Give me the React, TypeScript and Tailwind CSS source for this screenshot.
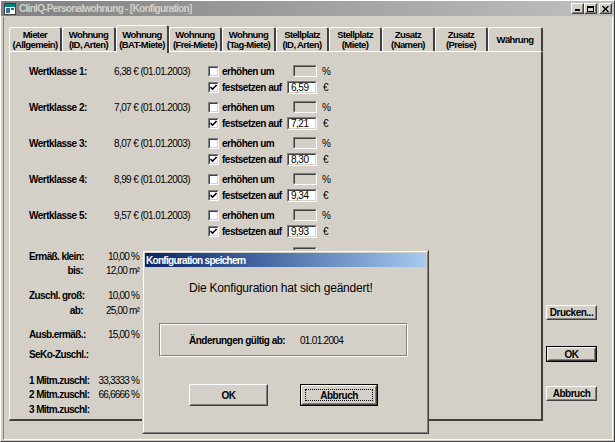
import React from "react";

type BoxProps = { className?: string; inner?: string; children?: React.ReactNode };

function Sunken({ className = "", inner = "", children }: BoxProps) {
  return (
    <div className={"border border-t-[#808080] border-l-[#808080] border-r-white border-b-white " + className}>
      <div className={"w-full h-full border border-t-[#404040] border-l-[#404040] border-r-[#d4d0c8] border-b-[#d4d0c8] " + inner}>
        {children}
      </div>
    </div>
  );
}

function Raised({ className = "", inner = "", children }: BoxProps) {
  return (
    <div className={"border border-t-white border-l-white border-r-[#404040] border-b-[#404040] " + className}>
      <div className={"w-full h-full border border-t-[#d4d0c8] border-l-[#d4d0c8] border-r-[#808080] border-b-[#808080] " + inner}>
        {children}
      </div>
    </div>
  );
}

function Check({ checked }: { checked?: boolean }) {
  return (
    <Sunken className="w-[11px] h-[11px] shrink-0" inner="bg-white flex items-center justify-center">
      {checked && (
        <svg width="7" height="7" viewBox="0 0 7 7">
          <path d="M0.5 3 L2.5 5.2 L6.5 1" stroke="#000" strokeWidth="1.6" fill="none" />
        </svg>
      )}
    </Sunken>
  );
}

function WinButton({ label, def, className = "" }: { label: string; def?: boolean; className?: string }) {
  const body = (
    <Raised className="w-full h-full" inner="flex items-center justify-center font-bold">
      {label}
    </Raised>
  );
  if (def) {
    return <div className={"border border-black " + className}>{body}</div>;
  }
  return <div className={className}>{body}</div>;
}

const tabs: { l1: string; l2?: string; w: string; sel?: boolean }[] = [
  { l1: "Mieter", l2: "(Allgemein)", w: "w-[53px]" },
  { l1: "Wohnung", l2: "(ID, Arten)", w: "w-[54px]" },
  { l1: "Wohnung", l2: "(BAT-Miete)", w: "w-[53px]", sel: true },
  { l1: "Wohnung", l2: "(Frei-Miete)", w: "w-[53px]" },
  { l1: "Wohnung", l2: "(Tag-Miete)", w: "w-[54px]" },
  { l1: "Stellplatz", l2: "(ID, Arten)", w: "w-[53px]" },
  { l1: "Stellplatz", l2: "(Miete)", w: "w-[53px]" },
  { l1: "Zusatz", l2: "(Namen)", w: "w-[53px]" },
  { l1: "Zusatz", l2: "(Preise)", w: "w-[53px]" },
  { l1: "Währung", w: "w-[55px]" },
];

const wk = [
  ["Wertklasse 1:", "6,38 € (01.01.2003)", "6,59"],
  ["Wertklasse 2:", "7,07 € (01.01.2003)", "7,21"],
  ["Wertklasse 3:", "8,07 € (01.01.2003)", "8,30"],
  ["Wertklasse 4:", "8,99 € (01.01.2003)", "9,34"],
  ["Wertklasse 5:", "9,57 € (01.01.2003)", "9,93"],
];

function Tab({ t }: { t: (typeof tabs)[number] }) {
  const base =
    "rounded-t-[3px] border-t border-l border-r-2 border-t-white border-l-white border-r-[#404040] flex flex-col items-center justify-center font-bold leading-[10px] text-[9.5px] tracking-[-0.6px] whitespace-nowrap bg-[#d4d0c8] ";
  const size = t.sel ? "h-[28px] -mb-[2px] relative z-10 " : "h-[24px] ";
  return (
    <div className={base + size + t.w}>
      <span>{t.l1}</span>
      {t.l2 && <span>{t.l2}</span>}
    </div>
  );
}

function LowRow({ label, value, right, className = "" }: { label: string; value?: string; right?: boolean; className?: string }) {
  return (
    <div className={"flex items-center h-[14px] " + className}>
      <div className={"w-[58px] font-bold whitespace-nowrap tracking-[-0.6px] " + (right ? "text-right pr-[4px]" : "")}>{label}</div>
      <div className="w-[52px] text-right whitespace-nowrap tracking-[-0.8px]">{value}</div>
    </div>
  );
}

export default function App() {
  return (
    <div className="w-[615px] h-[442px] bg-[#d4d0c8] relative overflow-hidden border border-t-white border-l-white border-r-[#404040] border-b-[#404040] font-['Liberation_Sans',Arial,sans-serif] text-[10px] tracking-[-0.5px] text-black">
      {/* title bar */}
      <div className="h-[15px] flex items-center bg-gradient-to-r from-[#808080] to-[#c0c0c0] pl-[3px] pr-[2px]">
        <svg width="12" height="12" viewBox="0 0 12 12" className="shrink-0">
          <rect x="0.5" y="0.5" width="11" height="11" fill="#fff" stroke="#404040" />
          <rect x="1" y="1" width="10" height="3" fill="#008080" />
          <rect x="2" y="5" width="4" height="5" fill="#3a6ea5" />
          <rect x="7" y="5" width="3" height="2" fill="#008080" />
        </svg>
        <span className="ml-[3px] font-bold text-[#d4d0c8] text-[10px] tracking-[-0.7px]">ClinIQ-Personalwohnung - [Konfiguration]</span>
        <div className="ml-auto flex items-center">
          <Raised className="w-[13px] h-[11px]" inner="bg-[#d4d0c8] flex items-end justify-center pb-[1px]">
            <div className="w-[5px] h-[2px] bg-black" />
          </Raised>
          <Raised className="w-[13px] h-[11px]" inner="bg-[#d4d0c8] flex items-center justify-center">
            <div className="w-[7px] h-[6px] border border-t-2 border-black" />
          </Raised>
          <Raised className="w-[13px] h-[11px] ml-[2px]" inner="bg-[#d4d0c8] flex items-center justify-center">
            <svg width="7" height="6" viewBox="0 0 7 6">
              <path d="M0.5 0 L6.5 6 M6.5 0 L0.5 6" stroke="#000" strokeWidth="1.4" />
            </svg>
          </Raised>
        </div>
      </div>

      {/* MDI client */}
      <div className="ml-[2px] mt-[1px] w-[610px] h-[423px] border-l border-r border-b border-l-[#808080] border-r-white border-b-white pl-[5px] pt-[8px] flex">
        {/* tab control */}
        <div className="w-[534px] flex flex-col">
          <div className="h-[26px] flex items-end">
            {tabs.map((t, i) => (
              <Tab key={i} t={t} />
            ))}
          </div>
          <div className="h-[370px] border-t border-l border-r-2 border-b-2 border-t-white border-l-white border-r-[#404040] border-b-[#404040] pl-[19px] pt-[11px]">
            <div className="flex flex-col gap-[4px]">
              {wk.map(([l, v, n], i) => (
                <div key={i} className="flex h-[32px]">
                  <div className="w-[85px] h-[16px] flex items-center font-bold whitespace-nowrap">{l}</div>
                  <div className="w-[94px] h-[16px] flex items-center whitespace-nowrap tracking-[-0.6px]">{v}</div>
                  <div className="flex flex-col">
                    <div className="h-[16px] flex items-center">
                      <Check />
                      <span className="ml-[3px] w-[65px] font-bold whitespace-nowrap">erhöhen um</span>
                      <div className="w-[30px] flex justify-end">
                        <Sunken className="w-[24px] h-[12px]" inner="bg-[#d4d0c8]" />
                      </div>
                      <span className="ml-[5px]">%</span>
                    </div>
                    <div className="h-[16px] flex items-center">
                      <Check checked />
                      <span className="ml-[3px] w-[65px] font-bold whitespace-nowrap">festsetzen auf</span>
                      <Sunken className="w-[30px] h-[13px]" inner="bg-white pl-[2px] leading-[9px] flex items-center">
                        {n}
                      </Sunken>
                      <span className="ml-[6px]">€</span>
                    </div>
                  </div>
                </div>
              ))}
            </div>

            <div className="flex items-start mt-[10px]">
              <div className="flex flex-col">
                <LowRow label="Ermäß. klein:" value="10,00 %" />
                <LowRow label="bis:" value="12,00 m²" right />
              </div>
              <Sunken className="w-[24px] h-[12px] ml-[154px] -mt-[2px]" inner="bg-[#d4d0c8]" />
            </div>
            <LowRow label="Zuschl. groß:" value="10,00 %" className="mt-[11px]" />
            <LowRow label="ab:" value="25,00 m²" right className="mt-[1px]" />
            <LowRow label="Ausb.ermäß.:" value="15,00 %" className="mt-[10px]" />
            <LowRow label="SeKo-Zuschl.:" className="mt-[6px]" />
            <LowRow label="1 Mitm.zuschl:" value="33,3333 %" className="mt-[12px]" />
            <LowRow label="2 Mitm.zuschl:" value="66,6666 %" />
            <LowRow label="3 Mitm.zuschl:" className="mt-[1px]" />
          </div>
        </div>

        {/* right buttons */}
        <div className="ml-[3px] flex flex-col">
          <WinButton label="Drucken..." className="w-[51px] h-[15px] mt-[280px]" />
          <WinButton label="OK" def className="w-[51px] h-[16px] mt-[26px]" />
          <WinButton label="Abbruch" className="w-[51px] h-[15px] mt-[24px]" />
        </div>
      </div>

      {/* dialog */}
      <div className="absolute left-[141px] top-[249px] w-[287px] h-[184px] border border-t-[#d4d0c8] border-l-[#d4d0c8] border-r-[#404040] border-b-[#404040]">
        <div className="w-full h-full border border-t-white border-l-white border-r-[#808080] border-b-[#808080] p-[1px] flex flex-col bg-[#d4d0c8]">
          <div className="h-[14px] bg-gradient-to-r from-[#0a246a] to-[#a6caf0] flex items-center pl-[1px] text-white font-bold tracking-[-0.7px]">
            Konfiguration speichern
          </div>
          <div className="pl-[44px] mt-[14px] h-[14px] flex items-center text-[12px] tracking-[-0.2px]">
            Die Konfiguration hat sich geändert!
          </div>
          <div className="ml-[14px] mt-[28px] w-[249px] h-[34px] border border-t-[#808080] border-l-[#808080] border-r-white border-b-white">
            <div className="w-full h-full border border-t-white border-l-white border-r-[#808080] border-b-[#808080] flex items-center pl-[28px]">
              <span className="w-[111px] font-bold whitespace-nowrap">Änderungen gültig ab:</span>
              <span className="tracking-[-0.7px]">01.01.2004</span>
            </div>
          </div>
          <div className="mt-[27px] ml-[44px] flex">
            <WinButton label="OK" className="w-[79px] h-[22px]" />
            <div className="ml-[32px] w-[78px] h-[22px] border border-black">
              <Raised className="w-full h-full" inner="flex items-center justify-center p-[2px]">
                <div className="w-full h-full border border-dotted border-black flex items-center justify-center font-bold">
                  Abbruch
                </div>
              </Raised>
            </div>
          </div>
        </div>
      </div>
    </div>
  );
}
